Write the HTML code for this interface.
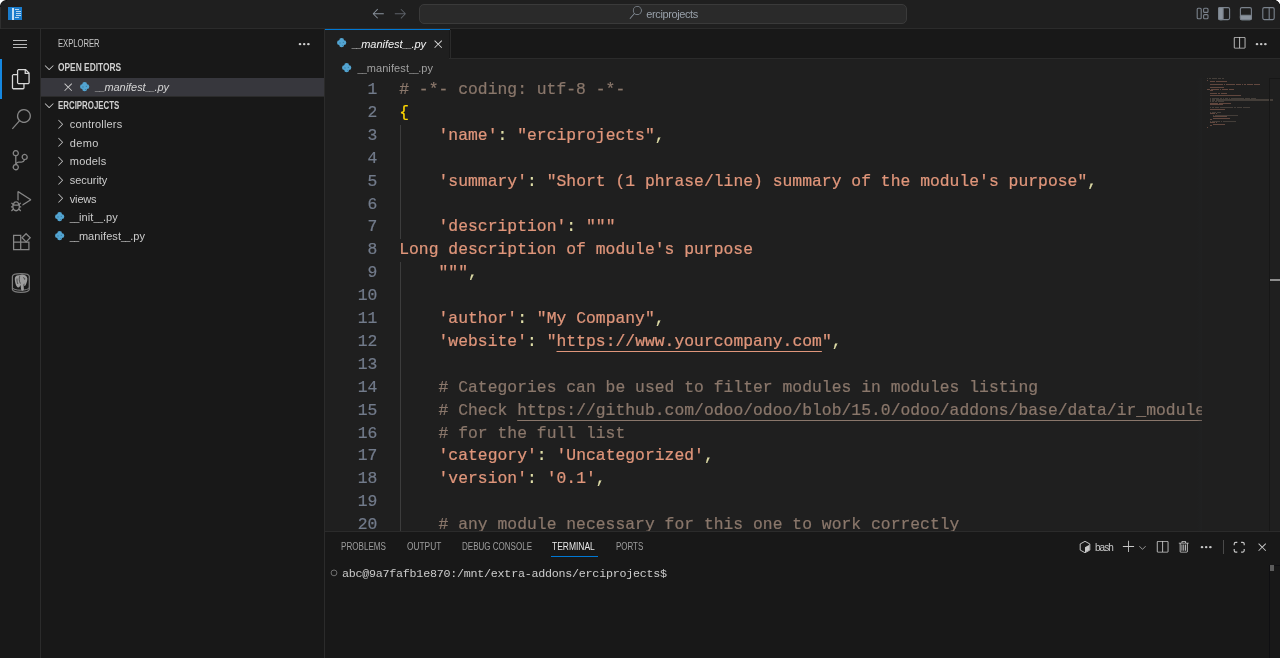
<!DOCTYPE html>
<html lang="en"><head><meta charset="utf-8"><title>__manifest__.py - erciprojects</title><style>
html,body{margin:0;padding:0;background:#181818;overflow:hidden}
#root{will-change:transform;position:relative;width:1280px;height:658px;overflow:hidden;background:#181818}
.abs{position:absolute}
.t{position:absolute;white-space:pre}
.i{position:absolute;display:block;overflow:visible}
.ln{position:absolute;white-space:pre;font-family:"Liberation Mono",monospace;-webkit-text-stroke:.22px}
</style></head><body><div id="root">
<div class="abs" style="left:0;top:0;width:1280px;height:28px;background:#1f1f1f"></div>
<div class="abs" style="left:0;top:28px;width:1280px;height:1px;background:#2b2b2b"></div>
<div class="abs" style="left:8px;top:7.200px;width:14.300px;height:12.600px;background:#1a7ccc"></div>
<div class="abs" style="left:12px;top:7.600px;width:1.900px;height:12.200px;background:#c4def3"></div>
<div class="abs" style="left:14.8px;top:9.1px;width:4.2px;height:.900px;background:#b5d5f0"></div>
<div class="abs" style="left:16.2px;top:11.1px;width:4.7px;height:.900px;background:#b5d5f0"></div>
<div class="abs" style="left:16.2px;top:13.1px;width:4.7px;height:.900px;background:#b5d5f0"></div>
<div class="abs" style="left:16.2px;top:15.1px;width:4.7px;height:.900px;background:#b5d5f0"></div>
<div class="abs" style="left:14.8px;top:17.1px;width:4.2px;height:.900px;background:#b5d5f0"></div>
<div class="abs" style="left:0;top:0;width:1px;height:658px;background:#2f2f2f"></div>
<div class="abs" style="left:0;top:0;width:7px;height:7px;background:radial-gradient(circle at 6.500px 6.500px, rgba(0,0,0,0) 5.600px, #111 6px, #fff 6.900px)"></div>
<div class="abs" style="left:1272px;top:0;width:8px;height:8px;background:radial-gradient(circle at 1.500px 6.500px, rgba(0,0,0,0) 5.900px, #111 6.300px, #fff 7.100px)"></div>
<svg class="i" style="left:371.20px;top:6.09px;" width="14.6" height="14.6" viewBox="0 0 16 16" fill="#8b949e"><path d="M7 3.093l-5 5V8.800l5 5 .707-.707-4.146-4.147H14v-1H3.560L7.700 3.800 7 3.093z"/></svg>
<svg class="i" style="left:393.20px;top:6.02px;" width="14.6" height="14.6" viewBox="0 0 16 16" fill="#5d6269"><path d="M9 13.887l5-5V8.180l-5-5-.707.707 4.146 4.147H2v1h10.440L8.300 13.187l.700.700z"/></svg>
<div class="abs" style="left:418.5px;top:4px;width:488px;height:19.7px;box-sizing:border-box;border:1px solid #3a3a3a;border-radius:5px;background:#2a2a2a"></div>
<svg class="i" style="left:629.25px;top:6.05px;" width="13.1" height="13.1" viewBox="0 0 24 24" fill="#8b949e"><path d="M15.25 0a8.25 8.25 0 0 0-6.18 13.72L1 22.88l1.12 1 8.05-9.12A8.251 8.251 0 1 0 15.25.01V0zm0 15a6.75 6.75 0 1 1 0-13.5 6.75 6.75 0 0 1 0 13.5z"/></svg>
<div class="t" style="left:646.30px;top:4.00px;line-height:20px;font-family:'Liberation Sans',sans-serif;font-size:11px;color:#98a0a9;letter-spacing:-0.387px;">erciprojects</div>
<svg class="i" style="left:1196px;top:6px" width="84" height="16" viewBox="0 0 84 16" fill="none" stroke="#7a828c" stroke-width="1.1"><rect x="1.2" y="2.2" width="4" height="10.600" rx="1"/><rect x="7.600" y="2.200" width="4.400" height="4.200" rx="1"/><rect x="7.600" y="8.600" width="4.400" height="4.200" rx="1"/><rect x="22.600" y="1.600" width="11" height="12" rx="1.5"/><rect x="22.600" y="1.600" width="4.500" height="12" rx="1" fill="#8b949e"/><rect x="44.400" y="1.600" width="11" height="12" rx="1.500"/><rect x="44.400" y="9.200" width="11" height="4.400" rx="1" fill="#8b949e"/><rect x="66.800" y="1.600" width="11.400" height="12" rx="1.500"/><line x1="73.200" y1="1.600" x2="73.200" y2="13.600"/></svg>
<div class="abs" style="left:0;top:29px;width:40px;height:629px;background:#181818"></div>
<div class="abs" style="left:40px;top:29px;width:1px;height:629px;background:#2b2b2b"></div>
<div class="abs" style="left:0;top:58.6px;width:1.700px;height:40.900px;background:#1587e0"></div>
<div class="abs" style="left:13.3px;top:40.3px;width:13.800px;height:1px;background:#b8b8b8"></div>
<div class="abs" style="left:13.3px;top:43.8px;width:13.800px;height:1px;background:#b8b8b8"></div>
<div class="abs" style="left:13.3px;top:47.3px;width:13.800px;height:1px;background:#b8b8b8"></div>
<svg class="i" style="left:11.03px;top:68.70px;" width="20.4" height="20.4" viewBox="0 0 24 24" fill="#d7d7d7"><path d="M17.5 0h-9L7 1.5V6H2.5L1 7.5v15.07L2.5 24h12.07L16 22.57V18h4.7l1.3-1.43V4.5L17.5 0zm0 2.12l2.38 2.38H17.5V2.12zm-3 20.38h-12v-15H7v9.07L8.5 18h6v4.5zm6-6h-12v-15H16V6h4.5v10.5z"/></svg>
<svg class="i" style="left:10.70px;top:109.40px;" width="20.4" height="20.4" viewBox="0 0 24 24" fill="#868686"><path d="M15.25 0a8.25 8.25 0 0 0-6.18 13.72L1 22.88l1.12 1 8.05-9.12A8.251 8.251 0 1 0 15.25.01V0zm0 15a6.75 6.75 0 1 1 0-13.5 6.75 6.75 0 0 1 0 13.5z"/></svg>
<svg class="i" style="left:10.20px;top:150.30px;" width="20.4" height="20.4" viewBox="0 0 24 24" fill="#868686"><path d="M21.007 8.222A3.738 3.738 0 0 0 15.045 5.2a3.737 3.737 0 0 0 1.156 6.583 2.988 2.988 0 0 1-2.668 1.67h-2.99a4.456 4.456 0 0 0-2.989 1.165V7.4a3.737 3.737 0 1 0-1.494 0v9.117a3.776 3.776 0 1 0 1.816.099 2.99 2.99 0 0 1 2.668-1.667h2.99a4.484 4.484 0 0 0 4.223-3.039 3.736 3.736 0 0 0 3.25-3.687zM4.565 3.738a2.242 2.242 0 1 1 4.484 0 2.242 2.242 0 0 1-4.484 0zm4.484 16.441a2.242 2.242 0 1 1-4.484 0 2.242 2.242 0 0 1 4.484 0zm8.221-9.715a2.242 2.242 0 1 1 0-4.485 2.242 2.242 0 0 1 0 4.485z"/></svg>
<svg class="i" style="left:10.88px;top:191.00px;" width="20.4" height="20.4" viewBox="0 0 24 24" fill="#868686"><path d="M10.94 13.5l-1.32 1.32a3.73 3.73 0 0 0-7.24 0L1.06 13.5 0 14.56l1.72 1.72-.22.22V18H0v1.5h1.5v.08c.077.489.214.966.41 1.42L0 22.94 1.06 24l1.65-1.65A4.308 4.308 0 0 0 6 24a4.31 4.31 0 0 0 3.29-1.65L10.94 24 12 22.94 10.09 21c.198-.464.336-.951.41-1.45v-.1H12V18h-1.5v-1.5l-.22-.22L12 14.56l-1.06-1.06zM6 13.5a2.25 2.25 0 0 1 2.25 2.25h-4.5A2.25 2.25 0 0 1 6 13.5zm3 6a3.33 3.33 0 0 1-3 3 3.33 3.33 0 0 1-3-3v-2.250h6v2.250zm14.760-9.900v1.260L13.500 17.370V15.600l8.500-5.370L9 2v9.460a5.070 5.070 0 0 0-1.500-.720V.630L8.640 0l15.120 9.600z"/></svg>
<svg class="i" style="left:10px;top:230px" width="24" height="24" viewBox="10 230 24 24" fill="none" stroke="#868686" stroke-width="1.25"><path d="M13.600 235.300H20.700V249.700H13.600ZM13.600 242.200H28.900V249.700H20.700"/><path d="M26.100 233.700L30.200 237.800L26.100 241.900L22 237.800Z"/></svg>
<svg class="i" style="left:10px;top:270px" width="22" height="26" viewBox="10 270 22 26" fill="none" stroke="#7c7c7c" stroke-width="1.25"><path d="M12.400 276.400C12.400 272.700 29.300 272.700 29.300 276.400V289.300C29.300 293.400 12.400 293.400 12.400 289.300Z"/><path d="M12.400 287.300C12.400 291.200 29.300 291.200 29.300 287.300" stroke-width="1"/><path d="M14.800 279.500C14.300 276.300 16.800 274.700 19.400 275.300C20.600 274.400 23 274.300 24.400 275.100C26.800 275.500 27.800 278 27.200 280.600C26.800 282.800 26 284.800 25.200 285.800C24.700 286.400 24.100 286 24.200 285.300L24.300 283.200C23.700 283.800 23.600 284.400 23.600 285.200L23.900 289.300C24 291 21.400 291.100 21.100 289.400L20.500 284.800C20.200 286.200 19.500 287.500 18.200 287.400C16.300 287.200 15.100 283 14.800 279.500Z" fill="#9c9c9c" stroke="none"/><path d="M19.700 276.200C18.900 278.200 19.100 281.200 20.400 283.600M23 277.900C24.300 277.300 25.200 278.400 24.600 279.700M17 278.500C16.800 280.500 17.200 282.500 17.900 284" stroke="#2a2a2a" stroke-width=".7"/></svg>
<div class="abs" style="left:41px;top:29px;width:283px;height:629px;background:#181818"></div>
<div class="abs" style="left:324px;top:29px;width:1.100px;height:629px;background:#2b2b2b"></div>
<div class="t" style="left:58.20px;top:34.10px;line-height:20px;font-family:'Liberation Sans',sans-serif;font-size:10px;color:#c8c8c8;transform-origin:0 50%;transform:scaleX(0.7620);">EXPLORER</div>
<svg class="i" style="left:297.30px;top:36.70px;" width="14.4" height="14.4" viewBox="0 0 16 16" fill="#d0d0d0"><ellipse cx="3.350" cy="8" rx="1.500" ry="1.250"/><ellipse cx="8" cy="8" rx="1.400" ry="1.250"/><ellipse cx="12.650" cy="8" rx="1.500" ry="1.250"/></svg>
<svg class="i" style="left:41.92px;top:60.28px;" width="14.4" height="14.4" viewBox="0 0 16 16" fill="#c8c8c8"><path d="M7.976 10.072l4.357-4.357.62.618L8.284 11h-.618L3 6.333l.619-.618 4.357 4.357z"/></svg>
<div class="t" style="left:57.90px;top:57.80px;line-height:20px;font-family:'Liberation Sans',sans-serif;font-size:10px;color:#d0d0d0;transform-origin:0 50%;transform:scaleX(0.8384);font-weight:bold;">OPEN EDITORS</div>
<div class="abs" style="left:41px;top:78px;width:283px;height:17.700px;background:#37373d"></div>
<svg class="i" style="left:60.80px;top:79.80px;" width="14.4" height="14.4" viewBox="0 0 16 16" fill="#c8c8c8"><path d="M8 8.707l3.646 3.647.708-.707L8.707 8l3.647-3.646-.707-.708L8 7.293 4.354 3.646l-.707.708L7.293 8l-3.646 3.646.707.708L8 8.707z"/></svg>
<svg class="i" style="left:79.85px;top:82.10px;" width="9.3" height="9.3" viewBox="0 0 10 10" fill="#53a5d2"><circle cx="5" cy="2.6" r="2.6"/><circle cx="5" cy="7.4" r="2.6"/><circle cx="2.6" cy="5" r="2.6"/><circle cx="7.4" cy="5" r="2.6"/><rect x="2.6" y="2.6" width="4.800" height="4.800"/><circle cx="3.200" cy="5.300" r=".6" fill="#2f6f93"/><circle cx="6.800" cy="4.600" r=".6" fill="#2f6f93"/><circle cx="5.800" cy="8" r=".5" fill="#2f6f93"/></svg>
<div class="t" style="left:95.50px;top:77.30px;line-height:20px;font-family:'Liberation Sans',sans-serif;font-size:11px;color:#d4d4d4;font-style:italic;"><span style="letter-spacing:-0.450px;font-size:8.8px">__</span><span style="letter-spacing:-0.041px">manifest</span><span style="letter-spacing:-0.450px;font-size:8.8px">__</span><span style="letter-spacing:-0.065px">.py</span></div>
<div class="abs" style="left:41px;top:95.700px;width:283px;height:1px;background:#2b2b2b"></div>
<svg class="i" style="left:41.92px;top:97.98px;" width="14.4" height="14.4" viewBox="0 0 16 16" fill="#c8c8c8"><path d="M7.976 10.072l4.357-4.357.62.618L8.284 11h-.618L3 6.333l.619-.618 4.357 4.357z"/></svg>
<div class="t" style="left:57.90px;top:96.20px;line-height:20px;font-family:'Liberation Sans',sans-serif;font-size:10px;color:#d0d0d0;transform-origin:0 50%;transform:scaleX(0.7880);font-weight:bold;">ERCIPROJECTS</div>
<svg class="i" style="left:53.18px;top:116.70px;" width="14.4" height="14.4" viewBox="0 0 16 16" fill="#c8c8c8"><path d="M10.072 8.024L5.715 3.667l.618-.62L11 7.716v.618L6.333 13l-.618-.619 4.357-4.357z"/></svg>
<div class="t" style="left:69.80px;top:113.90px;line-height:20px;font-family:'Liberation Sans',sans-serif;font-size:11px;color:#cccccc;letter-spacing:0.160px;">controllers</div>
<svg class="i" style="left:53.18px;top:135.38px;" width="14.4" height="14.4" viewBox="0 0 16 16" fill="#c8c8c8"><path d="M10.072 8.024L5.715 3.667l.618-.62L11 7.716v.618L6.333 13l-.618-.619 4.357-4.357z"/></svg>
<div class="t" style="left:69.80px;top:132.58px;line-height:20px;font-family:'Liberation Sans',sans-serif;font-size:11px;color:#cccccc;letter-spacing:0.321px;">demo</div>
<svg class="i" style="left:53.18px;top:154.06px;" width="14.4" height="14.4" viewBox="0 0 16 16" fill="#c8c8c8"><path d="M10.072 8.024L5.715 3.667l.618-.62L11 7.716v.618L6.333 13l-.618-.619 4.357-4.357z"/></svg>
<div class="t" style="left:69.80px;top:151.26px;line-height:20px;font-family:'Liberation Sans',sans-serif;font-size:11px;color:#cccccc;letter-spacing:0.190px;">models</div>
<svg class="i" style="left:53.18px;top:172.74px;" width="14.4" height="14.4" viewBox="0 0 16 16" fill="#c8c8c8"><path d="M10.072 8.024L5.715 3.667l.618-.62L11 7.716v.618L6.333 13l-.618-.619 4.357-4.357z"/></svg>
<div class="t" style="left:69.80px;top:169.94px;line-height:20px;font-family:'Liberation Sans',sans-serif;font-size:11px;color:#cccccc;letter-spacing:-0.062px;">security</div>
<svg class="i" style="left:53.18px;top:191.42px;" width="14.4" height="14.4" viewBox="0 0 16 16" fill="#c8c8c8"><path d="M10.072 8.024L5.715 3.667l.618-.62L11 7.716v.618L6.333 13l-.618-.619 4.357-4.357z"/></svg>
<div class="t" style="left:69.80px;top:188.62px;line-height:20px;font-family:'Liberation Sans',sans-serif;font-size:11px;color:#cccccc;letter-spacing:-0.181px;">views</div>
<svg class="i" style="left:55.15px;top:212.40px;" width="9.3" height="9.3" viewBox="0 0 10 10" fill="#53a5d2"><circle cx="5" cy="2.6" r="2.6"/><circle cx="5" cy="7.4" r="2.6"/><circle cx="2.6" cy="5" r="2.6"/><circle cx="7.4" cy="5" r="2.6"/><rect x="2.6" y="2.6" width="4.800" height="4.800"/><circle cx="3.200" cy="5.300" r=".6" fill="#2f6f93"/><circle cx="6.800" cy="4.600" r=".6" fill="#2f6f93"/><circle cx="5.800" cy="8" r=".5" fill="#2f6f93"/></svg>
<div class="t" style="left:69.80px;top:207.30px;line-height:20px;font-family:'Liberation Sans',sans-serif;font-size:11px;color:#cccccc;"><span style="letter-spacing:-0.294px;font-size:8.8px">__</span><span style="letter-spacing:0.110px">init</span><span style="letter-spacing:-0.194px;font-size:8.8px">__</span><span style="letter-spacing:0.042px">.py</span></div>
<svg class="i" style="left:55.15px;top:231.08px;" width="9.3" height="9.3" viewBox="0 0 10 10" fill="#53a5d2"><circle cx="5" cy="2.6" r="2.6"/><circle cx="5" cy="7.4" r="2.6"/><circle cx="2.6" cy="5" r="2.6"/><circle cx="7.4" cy="5" r="2.6"/><rect x="2.6" y="2.6" width="4.800" height="4.800"/><circle cx="3.200" cy="5.300" r=".6" fill="#2f6f93"/><circle cx="6.800" cy="4.600" r=".6" fill="#2f6f93"/><circle cx="5.800" cy="8" r=".5" fill="#2f6f93"/></svg>
<div class="t" style="left:69.80px;top:225.98px;line-height:20px;font-family:'Liberation Sans',sans-serif;font-size:11px;color:#cccccc;"><span style="letter-spacing:-0.353px;font-size:8.8px">__</span><span style="letter-spacing:0.071px">manifest</span><span style="letter-spacing:-0.353px;font-size:8.8px">__</span><span style="letter-spacing:0.041px">.py</span></div>
<div class="abs" style="left:325.100px;top:29px;width:954.900px;height:502px;background:#1f1f1f"></div>
<div class="abs" style="left:325.100px;top:29px;width:954.900px;height:29px;background:#181818"></div>
<div class="abs" style="left:325.100px;top:58px;width:954.900px;height:1.100px;background:#2b2b2b"></div>
<div class="abs" style="left:325.100px;top:29px;width:124.400px;height:30.100px;background:#1f1f1f"></div>
<div class="abs" style="left:325.100px;top:28.600px;width:125px;height:1.600px;background:#0078d4"></div>
<div class="abs" style="left:449.500px;top:30px;width:1.100px;height:28px;background:#2b2b2b"></div>
<svg class="i" style="left:336.85px;top:38.30px;" width="9.3" height="9.3" viewBox="0 0 10 10" fill="#53a5d2"><circle cx="5" cy="2.6" r="2.6"/><circle cx="5" cy="7.4" r="2.6"/><circle cx="2.6" cy="5" r="2.6"/><circle cx="7.4" cy="5" r="2.6"/><rect x="2.6" y="2.6" width="4.800" height="4.800"/><circle cx="3.200" cy="5.300" r=".6" fill="#2f6f93"/><circle cx="6.800" cy="4.600" r=".6" fill="#2f6f93"/><circle cx="5.800" cy="8" r=".5" fill="#2f6f93"/></svg>
<div class="t" style="left:352.30px;top:33.60px;line-height:20px;font-family:'Liberation Sans',sans-serif;font-size:11px;color:#f4f4f4;font-style:italic;"><span style="letter-spacing:-0.444px;font-size:8.8px">__</span><span style="letter-spacing:-0.034px">manifest</span><span style="letter-spacing:-0.444px;font-size:8.8px">__</span><span style="letter-spacing:-0.058px">.py</span></div>
<svg class="i" style="left:430.90px;top:37.00px;" width="14.4" height="14.4" viewBox="0 0 16 16" fill="#d8d8d8"><path d="M8 8.707l3.646 3.647.708-.707L8.707 8l3.647-3.646-.707-.708L8 7.293 4.354 3.646l-.707.708L7.293 8l-3.646 3.646.707.708L8 8.707z"/></svg>
<svg class="i" style="left:1232.15px;top:36.45px;" width="14.4" height="14.4" viewBox="0 0 16 16" fill="#c8c8c8"><path d="M14 1H3L2 2v11l1 1h11l1-1V2l-1-1zM8 13H3V2h5v11zm6 0H9V2h5v11z"/></svg>
<svg class="i" style="left:1254.40px;top:36.50px;" width="14.4" height="14.4" viewBox="0 0 16 16" fill="#c8c8c8"><ellipse cx="3.350" cy="8" rx="1.500" ry="1.250"/><ellipse cx="8" cy="8" rx="1.400" ry="1.250"/><ellipse cx="12.650" cy="8" rx="1.500" ry="1.250"/></svg>
<svg class="i" style="left:342.25px;top:63.10px;" width="9.3" height="9.3" viewBox="0 0 10 10" fill="#53a5d2"><circle cx="5" cy="2.6" r="2.6"/><circle cx="5" cy="7.4" r="2.6"/><circle cx="2.6" cy="5" r="2.6"/><circle cx="7.4" cy="5" r="2.6"/><rect x="2.6" y="2.6" width="4.800" height="4.800"/><circle cx="3.200" cy="5.300" r=".6" fill="#2f6f93"/><circle cx="6.800" cy="4.600" r=".6" fill="#2f6f93"/><circle cx="5.800" cy="8" r=".5" fill="#2f6f93"/></svg>
<div class="t" style="left:357.50px;top:58.30px;line-height:20px;font-family:'Liberation Sans',sans-serif;font-size:11px;color:#a0a0a0;"><span style="letter-spacing:-0.323px;font-size:8.8px">__</span><span style="letter-spacing:0.106px">manifest</span><span style="letter-spacing:-0.323px;font-size:8.8px">__</span><span style="letter-spacing:0.073px">.py</span></div>
<div class="abs" style="left:325.5px;top:79.1px;width:876.400px;height:451.9px;overflow:hidden">
<div class="ln" style="top:0.00px;height:22.9px;line-height:22.9px;font-size:16.33px;letter-spacing:0.030px;left:0;width:51.80px;text-align:right;color:#727b8b">1</div>
<div class="ln" style="top:0.00px;height:22.9px;line-height:22.9px;font-size:16.33px;letter-spacing:0.030px;left:73.70px"><span style="color:#8a776b"># -*- coding: utf-8 -*-</span></div>
<div class="ln" style="top:22.90px;height:22.9px;line-height:22.9px;font-size:16.33px;letter-spacing:0.030px;left:0;width:51.80px;text-align:right;color:#727b8b">2</div>
<div class="ln" style="top:22.90px;height:22.9px;line-height:22.9px;font-size:16.33px;letter-spacing:0.030px;left:73.70px"><span style="color:#ffd700">{</span></div>
<div class="ln" style="top:45.80px;height:22.9px;line-height:22.9px;font-size:16.33px;letter-spacing:0.030px;left:0;width:51.80px;text-align:right;color:#727b8b">3</div>
<div class="ln" style="top:45.80px;height:22.9px;line-height:22.9px;font-size:16.33px;letter-spacing:0.030px;left:73.70px">    <span style="color:#e0967b">&#x27;name&#x27;</span><span style="color:#e0dea8">: </span><span style="color:#e0967b">&quot;erciprojects&quot;</span><span style="color:#e0dea8">,</span></div>
<div class="ln" style="top:68.70px;height:22.9px;line-height:22.9px;font-size:16.33px;letter-spacing:0.030px;left:0;width:51.80px;text-align:right;color:#727b8b">4</div>
<div class="ln" style="top:91.60px;height:22.9px;line-height:22.9px;font-size:16.33px;letter-spacing:0.030px;left:0;width:51.80px;text-align:right;color:#727b8b">5</div>
<div class="ln" style="top:91.60px;height:22.9px;line-height:22.9px;font-size:16.33px;letter-spacing:0.030px;left:73.70px">    <span style="color:#e0967b">&#x27;summary&#x27;</span><span style="color:#e0dea8">: </span><span style="color:#e0967b">&quot;Short (1 phrase/line) summary of the module&#x27;s purpose&quot;</span><span style="color:#e0dea8">,</span></div>
<div class="ln" style="top:114.50px;height:22.9px;line-height:22.9px;font-size:16.33px;letter-spacing:0.030px;left:0;width:51.80px;text-align:right;color:#727b8b">6</div>
<div class="ln" style="top:137.40px;height:22.9px;line-height:22.9px;font-size:16.33px;letter-spacing:0.030px;left:0;width:51.80px;text-align:right;color:#727b8b">7</div>
<div class="ln" style="top:137.40px;height:22.9px;line-height:22.9px;font-size:16.33px;letter-spacing:0.030px;left:73.70px">    <span style="color:#e0967b">&#x27;description&#x27;</span><span style="color:#e0dea8">: </span><span style="color:#e0967b">&quot;&quot;&quot;</span></div>
<div class="ln" style="top:160.30px;height:22.9px;line-height:22.9px;font-size:16.33px;letter-spacing:0.030px;left:0;width:51.80px;text-align:right;color:#727b8b">8</div>
<div class="ln" style="top:160.30px;height:22.9px;line-height:22.9px;font-size:16.33px;letter-spacing:0.030px;left:73.70px"><span style="color:#e0967b">Long description of module&#x27;s purpose</span></div>
<div class="ln" style="top:183.20px;height:22.9px;line-height:22.9px;font-size:16.33px;letter-spacing:0.030px;left:0;width:51.80px;text-align:right;color:#727b8b">9</div>
<div class="ln" style="top:183.20px;height:22.9px;line-height:22.9px;font-size:16.33px;letter-spacing:0.030px;left:73.70px">    <span style="color:#e0967b">&quot;&quot;&quot;</span><span style="color:#e0dea8">,</span></div>
<div class="ln" style="top:206.10px;height:22.9px;line-height:22.9px;font-size:16.33px;letter-spacing:0.030px;left:0;width:51.80px;text-align:right;color:#727b8b">10</div>
<div class="ln" style="top:229.00px;height:22.9px;line-height:22.9px;font-size:16.33px;letter-spacing:0.030px;left:0;width:51.80px;text-align:right;color:#727b8b">11</div>
<div class="ln" style="top:229.00px;height:22.9px;line-height:22.9px;font-size:16.33px;letter-spacing:0.030px;left:73.70px">    <span style="color:#e0967b">&#x27;author&#x27;</span><span style="color:#e0dea8">: </span><span style="color:#e0967b">&quot;My Company&quot;</span><span style="color:#e0dea8">,</span></div>
<div class="ln" style="top:251.90px;height:22.9px;line-height:22.9px;font-size:16.33px;letter-spacing:0.030px;left:0;width:51.80px;text-align:right;color:#727b8b">12</div>
<div class="ln" style="top:251.90px;height:22.9px;line-height:22.9px;font-size:16.33px;letter-spacing:0.030px;left:73.70px">    <span style="color:#e0967b">&#x27;website&#x27;</span><span style="color:#e0dea8">: </span><span style="color:#e0967b">&quot;</span><span style="color:#e0967b;text-decoration:underline;text-decoration-thickness:1.200px;text-underline-offset:4.500px">https://www.yourcompany.com</span><span style="color:#e0967b">&quot;</span><span style="color:#e0dea8">,</span></div>
<div class="ln" style="top:274.80px;height:22.9px;line-height:22.9px;font-size:16.33px;letter-spacing:0.030px;left:0;width:51.80px;text-align:right;color:#727b8b">13</div>
<div class="ln" style="top:297.70px;height:22.9px;line-height:22.9px;font-size:16.33px;letter-spacing:0.030px;left:0;width:51.80px;text-align:right;color:#727b8b">14</div>
<div class="ln" style="top:297.70px;height:22.9px;line-height:22.9px;font-size:16.33px;letter-spacing:0.030px;left:73.70px">    <span style="color:#8a776b"># Categories can be used to filter modules in modules listing</span></div>
<div class="ln" style="top:320.60px;height:22.9px;line-height:22.9px;font-size:16.33px;letter-spacing:0.030px;left:0;width:51.80px;text-align:right;color:#727b8b">15</div>
<div class="ln" style="top:320.60px;height:22.9px;line-height:22.9px;font-size:16.33px;letter-spacing:0.030px;left:73.70px">    <span style="color:#8a776b"># Check </span><span style="color:#8a776b;text-decoration:underline;text-decoration-thickness:1.200px;text-underline-offset:4.500px">https://github.com/odoo/odoo/blob/15.0/odoo/addons/base/data/ir_module_category_data.xml</span></div>
<div class="ln" style="top:343.50px;height:22.9px;line-height:22.9px;font-size:16.33px;letter-spacing:0.030px;left:0;width:51.80px;text-align:right;color:#727b8b">16</div>
<div class="ln" style="top:343.50px;height:22.9px;line-height:22.9px;font-size:16.33px;letter-spacing:0.030px;left:73.70px">    <span style="color:#8a776b"># for the full list</span></div>
<div class="ln" style="top:366.40px;height:22.9px;line-height:22.9px;font-size:16.33px;letter-spacing:0.030px;left:0;width:51.80px;text-align:right;color:#727b8b">17</div>
<div class="ln" style="top:366.40px;height:22.9px;line-height:22.9px;font-size:16.33px;letter-spacing:0.030px;left:73.70px">    <span style="color:#e0967b">&#x27;category&#x27;</span><span style="color:#e0dea8">: </span><span style="color:#e0967b">&#x27;Uncategorized&#x27;</span><span style="color:#e0dea8">,</span></div>
<div class="ln" style="top:389.30px;height:22.9px;line-height:22.9px;font-size:16.33px;letter-spacing:0.030px;left:0;width:51.80px;text-align:right;color:#727b8b">18</div>
<div class="ln" style="top:389.30px;height:22.9px;line-height:22.9px;font-size:16.33px;letter-spacing:0.030px;left:73.70px">    <span style="color:#e0967b">&#x27;version&#x27;</span><span style="color:#e0dea8">: </span><span style="color:#e0967b">&#x27;0.1&#x27;</span><span style="color:#e0dea8">,</span></div>
<div class="ln" style="top:412.20px;height:22.9px;line-height:22.9px;font-size:16.33px;letter-spacing:0.030px;left:0;width:51.80px;text-align:right;color:#727b8b">19</div>
<div class="ln" style="top:435.10px;height:22.9px;line-height:22.9px;font-size:16.33px;letter-spacing:0.030px;left:0;width:51.80px;text-align:right;color:#727b8b">20</div>
<div class="ln" style="top:435.10px;height:22.9px;line-height:22.9px;font-size:16.33px;letter-spacing:0.030px;left:73.70px">    <span style="color:#8a776b"># any module necessary for this one to work correctly</span></div>
<div class="abs" style="left:74.70px;top:45.80px;width:1px;height:114.50px;background:#3c3c3c"></div>
<div class="abs" style="left:74.70px;top:183.20px;width:1px;height:297.70px;background:#3c3c3c"></div>
</div>
<div class="abs" style="left:1197px;top:78px;width:5px;height:453px;background:linear-gradient(90deg,rgba(34,36,38,0),rgba(34,36,38,.3))"></div>
<div class="abs" style="left:1207.10px;top:78.20px;width:0.75px;height:1.100px;background:rgba(140,122,108,.34)"></div>
<div class="abs" style="left:1208.60px;top:78.20px;width:2.25px;height:1.100px;background:rgba(140,122,108,.34)"></div>
<div class="abs" style="left:1211.60px;top:78.20px;width:5.25px;height:1.100px;background:rgba(140,122,108,.34)"></div>
<div class="abs" style="left:1217.60px;top:78.20px;width:3.75px;height:1.100px;background:rgba(140,122,108,.34)"></div>
<div class="abs" style="left:1222.10px;top:78.20px;width:2.25px;height:1.100px;background:rgba(140,122,108,.34)"></div>
<div class="abs" style="left:1207.10px;top:79.72px;width:0.75px;height:1.100px;background:rgba(226,150,122,.34)"></div>
<div class="abs" style="left:1210.10px;top:81.24px;width:5.25px;height:1.100px;background:rgba(226,150,122,.34)"></div>
<div class="abs" style="left:1216.10px;top:81.24px;width:11.25px;height:1.100px;background:rgba(226,150,122,.34)"></div>
<div class="abs" style="left:1210.10px;top:84.28px;width:7.50px;height:1.100px;background:rgba(226,150,122,.34)"></div>
<div class="abs" style="left:1218.35px;top:84.28px;width:4.50px;height:1.100px;background:rgba(226,150,122,.34)"></div>
<div class="abs" style="left:1223.60px;top:84.28px;width:1.50px;height:1.100px;background:rgba(226,150,122,.34)"></div>
<div class="abs" style="left:1225.85px;top:84.28px;width:9.00px;height:1.100px;background:rgba(226,150,122,.34)"></div>
<div class="abs" style="left:1235.60px;top:84.28px;width:5.25px;height:1.100px;background:rgba(226,150,122,.34)"></div>
<div class="abs" style="left:1241.60px;top:84.28px;width:1.50px;height:1.100px;background:rgba(226,150,122,.34)"></div>
<div class="abs" style="left:1243.85px;top:84.28px;width:2.25px;height:1.100px;background:rgba(226,150,122,.34)"></div>
<div class="abs" style="left:1246.85px;top:84.28px;width:6.00px;height:1.100px;background:rgba(226,150,122,.34)"></div>
<div class="abs" style="left:1253.60px;top:84.28px;width:6.75px;height:1.100px;background:rgba(226,150,122,.34)"></div>
<div class="abs" style="left:1210.10px;top:87.32px;width:10.50px;height:1.100px;background:rgba(226,150,122,.34)"></div>
<div class="abs" style="left:1221.35px;top:87.32px;width:2.25px;height:1.100px;background:rgba(226,150,122,.34)"></div>
<div class="abs" style="left:1207.10px;top:88.84px;width:3.00px;height:1.100px;background:rgba(226,150,122,.34)"></div>
<div class="abs" style="left:1210.85px;top:88.84px;width:8.25px;height:1.100px;background:rgba(226,150,122,.34)"></div>
<div class="abs" style="left:1219.85px;top:88.84px;width:1.50px;height:1.100px;background:rgba(226,150,122,.34)"></div>
<div class="abs" style="left:1222.10px;top:88.84px;width:6.00px;height:1.100px;background:rgba(226,150,122,.34)"></div>
<div class="abs" style="left:1228.85px;top:88.84px;width:5.25px;height:1.100px;background:rgba(226,150,122,.34)"></div>
<div class="abs" style="left:1210.10px;top:90.36px;width:3.00px;height:1.100px;background:rgba(226,150,122,.34)"></div>
<div class="abs" style="left:1210.10px;top:93.40px;width:6.75px;height:1.100px;background:rgba(226,150,122,.34)"></div>
<div class="abs" style="left:1217.60px;top:93.40px;width:2.25px;height:1.100px;background:rgba(226,150,122,.34)"></div>
<div class="abs" style="left:1220.60px;top:93.40px;width:6.75px;height:1.100px;background:rgba(226,150,122,.34)"></div>
<div class="abs" style="left:1210.10px;top:94.92px;width:7.50px;height:1.100px;background:rgba(226,150,122,.34)"></div>
<div class="abs" style="left:1218.35px;top:94.92px;width:22.50px;height:1.100px;background:rgba(226,150,122,.34)"></div>
<div class="abs" style="left:1210.10px;top:97.96px;width:0.75px;height:1.100px;background:rgba(140,122,108,.34)"></div>
<div class="abs" style="left:1211.60px;top:97.96px;width:7.50px;height:1.100px;background:rgba(140,122,108,.34)"></div>
<div class="abs" style="left:1219.85px;top:97.96px;width:2.25px;height:1.100px;background:rgba(140,122,108,.34)"></div>
<div class="abs" style="left:1222.85px;top:97.96px;width:1.50px;height:1.100px;background:rgba(140,122,108,.34)"></div>
<div class="abs" style="left:1225.10px;top:97.96px;width:3.00px;height:1.100px;background:rgba(140,122,108,.34)"></div>
<div class="abs" style="left:1228.85px;top:97.96px;width:1.50px;height:1.100px;background:rgba(140,122,108,.34)"></div>
<div class="abs" style="left:1231.10px;top:97.96px;width:4.50px;height:1.100px;background:rgba(140,122,108,.34)"></div>
<div class="abs" style="left:1236.35px;top:97.96px;width:5.25px;height:1.100px;background:rgba(140,122,108,.34)"></div>
<div class="abs" style="left:1242.35px;top:97.96px;width:1.50px;height:1.100px;background:rgba(140,122,108,.34)"></div>
<div class="abs" style="left:1244.60px;top:97.96px;width:5.25px;height:1.100px;background:rgba(140,122,108,.34)"></div>
<div class="abs" style="left:1250.60px;top:97.96px;width:5.25px;height:1.100px;background:rgba(140,122,108,.34)"></div>
<div class="abs" style="left:1210.10px;top:99.48px;width:0.75px;height:1.100px;background:rgba(140,122,108,.34)"></div>
<div class="abs" style="left:1211.60px;top:99.48px;width:3.75px;height:1.100px;background:rgba(140,122,108,.34)"></div>
<div class="abs" style="left:1216.10px;top:99.48px;width:57.00px;height:1.100px;background:rgba(140,122,108,.34)"></div>
<div class="abs" style="left:1210.10px;top:101.00px;width:0.75px;height:1.100px;background:rgba(140,122,108,.34)"></div>
<div class="abs" style="left:1211.60px;top:101.00px;width:2.25px;height:1.100px;background:rgba(140,122,108,.34)"></div>
<div class="abs" style="left:1214.60px;top:101.00px;width:2.25px;height:1.100px;background:rgba(140,122,108,.34)"></div>
<div class="abs" style="left:1217.60px;top:101.00px;width:3.00px;height:1.100px;background:rgba(140,122,108,.34)"></div>
<div class="abs" style="left:1221.35px;top:101.00px;width:3.00px;height:1.100px;background:rgba(140,122,108,.34)"></div>
<div class="abs" style="left:1210.10px;top:102.52px;width:8.25px;height:1.100px;background:rgba(226,150,122,.34)"></div>
<div class="abs" style="left:1219.10px;top:102.52px;width:12.00px;height:1.100px;background:rgba(226,150,122,.34)"></div>
<div class="abs" style="left:1210.10px;top:104.04px;width:7.50px;height:1.100px;background:rgba(226,150,122,.34)"></div>
<div class="abs" style="left:1218.35px;top:104.04px;width:4.50px;height:1.100px;background:rgba(226,150,122,.34)"></div>
<div class="abs" style="left:1210.10px;top:107.08px;width:0.75px;height:1.100px;background:rgba(140,122,108,.34)"></div>
<div class="abs" style="left:1211.60px;top:107.08px;width:2.25px;height:1.100px;background:rgba(140,122,108,.34)"></div>
<div class="abs" style="left:1214.60px;top:107.08px;width:4.50px;height:1.100px;background:rgba(140,122,108,.34)"></div>
<div class="abs" style="left:1219.85px;top:107.08px;width:6.75px;height:1.100px;background:rgba(140,122,108,.34)"></div>
<div class="abs" style="left:1227.35px;top:107.08px;width:2.25px;height:1.100px;background:rgba(140,122,108,.34)"></div>
<div class="abs" style="left:1230.35px;top:107.08px;width:3.00px;height:1.100px;background:rgba(140,122,108,.34)"></div>
<div class="abs" style="left:1234.10px;top:107.08px;width:2.25px;height:1.100px;background:rgba(140,122,108,.34)"></div>
<div class="abs" style="left:1237.10px;top:107.08px;width:1.50px;height:1.100px;background:rgba(140,122,108,.34)"></div>
<div class="abs" style="left:1239.35px;top:107.08px;width:3.00px;height:1.100px;background:rgba(140,122,108,.34)"></div>
<div class="abs" style="left:1243.10px;top:107.08px;width:6.75px;height:1.100px;background:rgba(140,122,108,.34)"></div>
<div class="abs" style="left:1210.10px;top:108.60px;width:7.50px;height:1.100px;background:rgba(226,150,122,.34)"></div>
<div class="abs" style="left:1218.35px;top:108.60px;width:6.75px;height:1.100px;background:rgba(226,150,122,.34)"></div>
<div class="abs" style="left:1210.10px;top:111.64px;width:0.75px;height:1.100px;background:rgba(140,122,108,.34)"></div>
<div class="abs" style="left:1211.60px;top:111.64px;width:4.50px;height:1.100px;background:rgba(140,122,108,.34)"></div>
<div class="abs" style="left:1216.85px;top:111.64px;width:4.50px;height:1.100px;background:rgba(140,122,108,.34)"></div>
<div class="abs" style="left:1210.10px;top:113.16px;width:5.25px;height:1.100px;background:rgba(226,150,122,.34)"></div>
<div class="abs" style="left:1216.10px;top:113.16px;width:0.75px;height:1.100px;background:rgba(226,150,122,.34)"></div>
<div class="abs" style="left:1213.10px;top:114.68px;width:0.75px;height:1.100px;background:rgba(140,122,108,.34)"></div>
<div class="abs" style="left:1214.60px;top:114.68px;width:23.25px;height:1.100px;background:rgba(140,122,108,.34)"></div>
<div class="abs" style="left:1213.10px;top:116.20px;width:13.50px;height:1.100px;background:rgba(226,150,122,.34)"></div>
<div class="abs" style="left:1213.10px;top:117.72px;width:16.50px;height:1.100px;background:rgba(226,150,122,.34)"></div>
<div class="abs" style="left:1210.10px;top:119.24px;width:1.50px;height:1.100px;background:rgba(226,150,122,.34)"></div>
<div class="abs" style="left:1210.10px;top:120.76px;width:0.75px;height:1.100px;background:rgba(140,122,108,.34)"></div>
<div class="abs" style="left:1211.60px;top:120.76px;width:3.00px;height:1.100px;background:rgba(140,122,108,.34)"></div>
<div class="abs" style="left:1215.35px;top:120.76px;width:4.50px;height:1.100px;background:rgba(140,122,108,.34)"></div>
<div class="abs" style="left:1220.60px;top:120.76px;width:1.50px;height:1.100px;background:rgba(140,122,108,.34)"></div>
<div class="abs" style="left:1222.85px;top:120.76px;width:9.75px;height:1.100px;background:rgba(140,122,108,.34)"></div>
<div class="abs" style="left:1233.35px;top:120.76px;width:3.00px;height:1.100px;background:rgba(140,122,108,.34)"></div>
<div class="abs" style="left:1210.10px;top:122.28px;width:5.25px;height:1.100px;background:rgba(226,150,122,.34)"></div>
<div class="abs" style="left:1216.10px;top:122.28px;width:0.75px;height:1.100px;background:rgba(226,150,122,.34)"></div>
<div class="abs" style="left:1213.10px;top:123.80px;width:12.00px;height:1.100px;background:rgba(226,150,122,.34)"></div>
<div class="abs" style="left:1210.10px;top:125.32px;width:1.50px;height:1.100px;background:rgba(226,150,122,.34)"></div>
<div class="abs" style="left:1207.10px;top:126.84px;width:0.75px;height:1.100px;background:rgba(226,150,122,.34)"></div>
<div class="abs" style="left:1269px;top:78px;width:1px;height:453px;background:#171717"></div>
<div class="abs" style="left:1269px;top:77.700px;width:11px;height:1px;background:#171717"></div>
<div class="abs" style="left:1270px;top:279.400px;width:10px;height:1.700px;background:#8e8e8e"></div>
<div class="abs" style="left:325.100px;top:531px;width:954.900px;height:127px;background:#181818"></div>
<div class="abs" style="left:325.100px;top:530.900px;width:954.900px;height:1.200px;background:#2b2b2b"></div>
<div class="t" style="left:341.30px;top:537.20px;line-height:20px;font-family:'Liberation Sans',sans-serif;font-size:10px;color:#9d9d9d;transform-origin:0 50%;transform:scaleX(0.8098);">PROBLEMS</div>
<div class="t" style="left:406.60px;top:537.20px;line-height:20px;font-family:'Liberation Sans',sans-serif;font-size:10px;color:#9d9d9d;transform-origin:0 50%;transform:scaleX(0.8344);">OUTPUT</div>
<div class="t" style="left:461.70px;top:537.20px;line-height:20px;font-family:'Liberation Sans',sans-serif;font-size:10px;color:#9d9d9d;transform-origin:0 50%;transform:scaleX(0.8024);">DEBUG CONSOLE</div>
<div class="t" style="left:552.20px;top:537.20px;line-height:20px;font-family:'Liberation Sans',sans-serif;font-size:10px;color:#e7e7e7;transform-origin:0 50%;transform:scaleX(0.8465);">TERMINAL</div>
<div class="t" style="left:615.50px;top:537.20px;line-height:20px;font-family:'Liberation Sans',sans-serif;font-size:10px;color:#9d9d9d;transform-origin:0 50%;transform:scaleX(0.7967);">PORTS</div>
<div class="abs" style="left:550.800px;top:555.600px;width:47px;height:1px;background:#0078d4"></div>
<svg class="i" style="left:329px;top:568px" width="10" height="10" viewBox="329 568 10 10" fill="none" stroke="#707070" stroke-width="1"><circle cx="334" cy="572.900" r="2.900"/></svg>
<div class="t" style="left:341.90px;top:564.10px;line-height:20px;font-family:'Liberation Mono',monospace;font-size:11.7px;color:#cccccc;letter-spacing:-0.244px;">abc@9a7fafb1e870:/mnt/extra-addons/erciprojects$</div>
<svg class="i" style="left:1077.800px;top:540.200px" width="14" height="14" viewBox="0 0 16 16" fill="none" stroke="#c8c8c8" stroke-width="1.1"><path d="M8 1.500l5.500 3v7l-5.500 3-5.500-3v-7z" stroke-linejoin="round"/><path d="M8 8.200l5-2.700v6l-5 2.800z" fill="#c8c8c8" stroke="none"/></svg>
<div class="t" style="left:1095.00px;top:537.60px;line-height:20px;font-family:'Liberation Sans',sans-serif;font-size:10px;color:#c8c8c8;letter-spacing:-0.946px;">bash</div>
<svg class="i" style="left:1121.93px;top:540.43px;" width="13.8" height="13.8" viewBox="0 0 16 16" fill="#c8c8c8"><path d="M14 7v1H8v6H7V8H1V7h6V1h1v6h6z"/></svg>
<svg class="i" style="left:1137.01px;top:541.55px;" width="11" height="11" viewBox="0 0 16 16" fill="#c8c8c8"><path d="M7.976 10.072l4.357-4.357.62.618L8.284 11h-.618L3 6.333l.619-.618 4.357 4.357z"/></svg>
<svg class="i" style="left:1154.75px;top:540.25px;" width="14.4" height="14.4" viewBox="0 0 16 16" fill="#c8c8c8"><path d="M14 1H3L2 2v11l1 1h11l1-1V2l-1-1zM8 13H3V2h5v11zm6 0H9V2h5v11z"/></svg>
<svg class="i" style="left:1176.95px;top:540.25px;" width="14.4" height="14.4" viewBox="0 0 16 16" fill="#c8c8c8"><path d="M10 3h3v1h-1v9l-1 1H4l-1-1V4H2V3h3V2a1 1 0 0 1 1-1h3a1 1 0 0 1 1 1v1zM9 2H6v1h3V2zM4 13h7V4H4v9zm2-8H5v7h1V5zm1 0h1v7H7V5zm2 0h1v7H9V5z"/></svg>
<svg class="i" style="left:1198.80px;top:540.10px;" width="14.4" height="14.4" viewBox="0 0 16 16" fill="#c8c8c8"><ellipse cx="3.350" cy="8" rx="1.500" ry="1.250"/><ellipse cx="8" cy="8" rx="1.400" ry="1.250"/><ellipse cx="12.650" cy="8" rx="1.500" ry="1.250"/></svg>
<div class="abs" style="left:1222.500px;top:540.200px;width:1.300px;height:13.500px;background:#4a4a4a"></div>
<svg class="i" style="left:1232px;top:540px" width="15" height="15" viewBox="1232 540 15 15" fill="none" stroke="#c8c8c8" stroke-width="1.15"><path d="M1234.200 545.300V543.900A1.600 1.600 0 0 1 1235.800 542.300H1237.300M1241.100 542.300H1242.600A1.600 1.600 0 0 1 1244.200 543.900V545.300M1244.200 549.100V550.500A1.600 1.600 0 0 1 1242.600 552.100H1241.100M1237.300 552.100H1235.800A1.600 1.600 0 0 1 1234.200 550.500V549.100"/></svg>
<svg class="i" style="left:1254.60px;top:540.10px;" width="14.4" height="14.4" viewBox="0 0 16 16" fill="#c8c8c8"><path d="M8 8.707l3.646 3.647.708-.707L8.707 8l3.647-3.646-.707-.708L8 7.293 4.354 3.646l-.707.708L7.293 8l-3.646 3.646.707.708L8 8.707z"/></svg>
<div class="abs" style="left:1269px;top:565px;width:1px;height:93px;background:#0f0f12"></div>
<div class="abs" style="left:1269px;top:565px;width:11px;height:1px;background:#0f0f12"></div>
<div class="abs" style="left:1270px;top:565.300px;width:4px;height:5.400px;background:#5c5c5c"></div>
</div></body></html>
